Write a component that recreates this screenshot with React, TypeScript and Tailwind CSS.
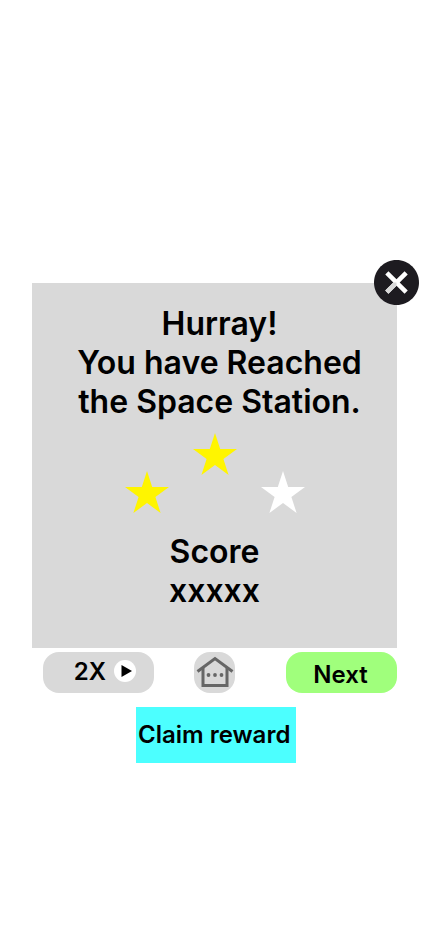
type StarProps = { earned: boolean };

function Star({ earned }: StarProps) {
  return (
    <svg
      viewBox="0 0 44 42"
      className={`h-[42px] w-11 ${earned ? "text-[#fff500]" : "text-white"}`}
      fill="currentColor"
      aria-hidden="true"
    >
      <path d="M22 0 27.2 16H44L30.4 25.9 35.6 42 22 32.1 8.4 42 13.6 25.9 0 16H16.8Z" />
    </svg>
  );
}

export default function App() {
  return (
    <main className="min-h-screen bg-white pt-[283px] pr-[33px] pb-8 pl-8 font-['Inter',sans-serif] font-semibold text-black">
      <section className="relative flex aspect-square flex-col items-center bg-[#d9d9d9] pt-[21px]">
        <button
          type="button"
          aria-label="Close"
          className="absolute -top-[23px] -right-[22px] size-[45px] rounded-full"
        >
          <svg viewBox="2 2 20 20" className="size-full" aria-hidden="true">
            <path
              fill="#1d1b20"
              d="M12 2C6.47 2 2 6.47 2 12s4.47 10 10 10 10-4.47 10-10S17.53 2 12 2z"
            />
            <path
              fill="#ffffff"
              d="M17 15.59 15.59 17 12 13.41 8.41 17 7 15.59 10.59 12 7 8.41 8.41 7 12 10.59 15.59 7 17 8.41 13.41 12z"
            />
            <path fill="#d9d9d9" d="M12 12V13.41L8.41 17 7 15.59 10.59 12z" />
          </svg>
        </button>

        <h1 className="pl-[10px] text-center text-[32px] leading-[39px]">
          Hurray!
          <br />
          You have Reached
          <br />
          the Space Station.
        </h1>

        <div
          role="img"
          aria-label="2 of 3 stars"
          className="mt-3 flex h-20 gap-6"
        >
          <div className="self-end">
            <Star earned />
          </div>
          <div>
            <Star earned />
          </div>
          <div className="self-end">
            <Star earned={false} />
          </div>
        </div>

        <p className="mt-[19px] text-center text-[32px] leading-[39px]">
          Score
          <br />
          xxxxx
        </p>
      </section>

      <div className="mt-1 flex gap-10 pl-[11px]">
        <button
          type="button"
          className="flex h-[41px] w-[111px] items-center justify-end gap-2 rounded-2xl bg-[#d9d9d9] pr-4 pb-px text-2xl"
        >
          2X
          <svg viewBox="0 0 24 24" className="size-6" aria-hidden="true">
            <circle cx="11" cy="11" r="11" fill="#ffffff" />
            <path d="M7.5 5 18 11 7.5 17Z" fill="#000000" />
          </svg>
        </button>
        <button
          type="button"
          aria-label="Home"
          className="flex size-[41px] items-center justify-center rounded-2xl bg-[#d9d9d9]"
        >
          <svg
            viewBox="0 0 41 41"
            className="size-full"
            fill="none"
            stroke="#666666"
            strokeWidth="3"
            aria-hidden="true"
          >
            <path d="M3.5 19.5 21 6.5 38.5 19.5" />
            <path d="M9 16V33.5H33V16" />
            <g fill="#666666" stroke="none">
              <circle cx="14.5" cy="23" r="1.9" />
              <circle cx="21" cy="23" r="1.9" />
              <circle cx="27.5" cy="23" r="1.9" />
            </g>
          </svg>
        </button>
        <button
          type="button"
          className="ml-auto flex h-[41px] w-[111px] items-center justify-center rounded-2xl bg-[#a0ff7c] pt-1 pr-[2px] text-2xl"
        >
          Next
        </button>
      </div>

      <div className="mt-[14px] flex justify-center pl-[3px]">
        <button
          type="button"
          className="h-14 w-40 bg-[#4cffff] pl-[2px] text-left text-2xl whitespace-nowrap"
        >
          Claim reward
        </button>
      </div>
    </main>
  );
}
